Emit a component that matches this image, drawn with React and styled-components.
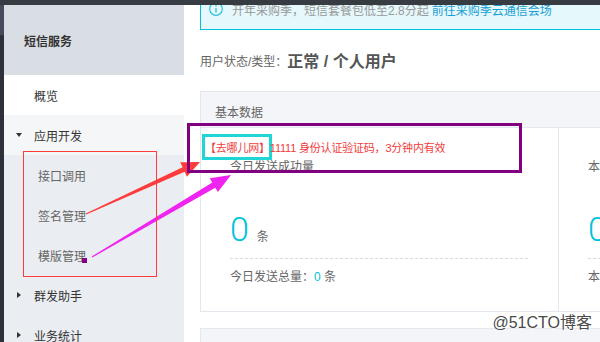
import React from "react";
import styled, { createGlobalStyle } from "styled-components";

const GlobalStyle = createGlobalStyle`
  html, body {
    margin: 0;
    padding: 0;
    background: #fff;
  }
  body {
    font-family: "Liberation Sans", "Noto Sans CJK SC", sans-serif;
  }
`;

const menu = [
  { label: "概览", kind: "item", bg: "#ffffff" },
  { label: "应用开发", kind: "group", open: true, bg: "#f5f6f8" },
  { label: "接口调用", kind: "sub" },
  { label: "签名管理", kind: "sub" },
  { label: "模版管理", kind: "sub" },
  { label: "群发助手", kind: "group" },
  { label: "业务统计", kind: "group" },
];

const stats = [
  { title: "今日发送成功量", total: "今日发送总量：" },
  { title: "本月发送成功量", total: "本月发送总量：" },
];

const App = () => {
  return (
    <Page>
      <GlobalStyle />
      <TopBar />
      <Body>
        <Rail />
        <Sidebar>
          <SideHeader>短信服务</SideHeader>
          {menu.map((m) => (
            <MenuItem key={m.label} $kind={m.kind} $bg={m.bg}>
              {m.kind === "group" && (
                <CaretBox>
                  <Caret $open={m.open} />
                </CaretBox>
              )}
              {m.label}
            </MenuItem>
          ))}
        </Sidebar>
        <Main>
          <MainInner>
            <Notice>
              <svg width="14" height="14" viewBox="0 0 14 14">
                <circle cx="7" cy="7" r="6.3" fill="none" stroke="#2bbfe0" strokeWidth="1.2" />
                <line x1="7" y1="6" x2="7" y2="10.5" stroke="#2bbfe0" strokeWidth="1.3" />
                <circle cx="7" cy="4" r="0.8" fill="#2bbfe0" />
              </svg>
              <NoticeText>开年采购季，短信套餐包低至2.8分起</NoticeText>
              <NoticeLink>前往采购季云通信会场</NoticeLink>
            </Notice>
            <StatusRow>
              <StatusLabel>用户状态/类型：</StatusLabel>
              <StatusValue>正常 / 个人用户</StatusValue>
            </StatusRow>
            <Card>
              <CardHeader>基本数据</CardHeader>
              <CardBody>
                {stats.map((s) => (
                  <Stat key={s.title}>
                    <StatLabel>{s.title}</StatLabel>
                    <NumberRow>
                      <BigNumber>0</BigNumber>
                      <Unit>条</Unit>
                    </NumberRow>
                    <Dashed />
                    <StatLabel>
                      {s.total}
                      <Cyan>0</Cyan> 条
                    </StatLabel>
                  </Stat>
                ))}
              </CardBody>
            </Card>
            <Card $gap={16}>
              <CardHeader />
            </Card>
          </MainInner>
        </Main>
      </Body>

      <Arrows width="600" height="342" viewBox="0 0 600 342">
        <polygon
          points="86.2,214.5 184.6,171.8 186.9,176.8 200,162 180.3,162.2 182.6,167.2 85.8,213.5"
          fill="#ff3c3c"
        />
        <polygon
          points="92.3,257.5 215.3,187.8 217.9,192.1 231,175 209.7,178.3 212.3,182.6 91.7,256.5"
          fill="#f024f0"
        />
        <rect x="82" y="258" width="5" height="5" fill="#800080" />
      </Arrows>
      <RedFrame />
      <PurpleFrame />
      <CyanFrame />
      <SmsText>【去哪儿网】11111 身份认证验证码，3分钟内有效</SmsText>
      <Watermark>@51CTO博客</Watermark>
    </Page>
  );
};

export default App;

const Page = styled.div`
  position: relative;
  width: 600px;
  height: 342px;
  overflow: hidden;
  display: flex;
  flex-direction: column;
`;

const TopBar = styled.div`
  height: 5px;
  flex-shrink: 0;
  background: #373c42;
  position: relative;
  z-index: 2;
`;

const Body = styled.div`
  flex: 1;
  display: flex;
  min-height: 0;
`;

const Rail = styled.div`
  width: 4px;
  flex-shrink: 0;
  background: linear-gradient(#454b5b 0 30px, #2e3139 30px);
`;

const Sidebar = styled.div`
  width: 180px;
  flex-shrink: 0;
  display: flex;
  flex-direction: column;
  background: #eaedf1;
`;

const SideHeader = styled.div`
  height: 70px;
  flex-shrink: 0;
  display: flex;
  align-items: center;
  padding-left: 20px;
  background: #d9dee4;
  color: #333;
  font-size: 12px;
  font-weight: 700;
`;

const MenuItem = styled.div`
  height: 40px;
  flex-shrink: 0;
  display: flex;
  align-items: center;
  box-sizing: border-box;
  padding-left: ${(p) => (p.$kind === "sub" ? 34 : p.$kind === "group" ? 11 : 30)}px;
  background: ${(p) => p.$bg || "transparent"};
  color: ${(p) => (p.$kind === "sub" ? "#666" : "#333")};
  font-size: 12px;
`;

const CaretBox = styled.span`
  width: 7px;
  margin-right: 12px;
  display: flex;
  justify-content: center;
`;

const Caret = styled.span`
  width: 0;
  height: 0;
  ${(p) =>
    p.$open
      ? `border-left: 3.5px solid transparent;
         border-right: 3.5px solid transparent;
         border-top: 4px solid #333;`
      : `border-top: 3px solid transparent;
         border-bottom: 3px solid transparent;
         border-left: 4px solid #333;`}
`;

const Main = styled.div`
  flex: 1;
  min-width: 0;
  overflow: hidden;
  padding-left: 16px;
  background: #fff;
`;

const MainInner = styled.div`
  width: 760px;
  margin-top: -17px;
`;

const Notice = styled.div`
  height: 40px;
  display: flex;
  align-items: center;
  padding-left: 8px;
  border: 1px solid #00c1de;
  background: #e5f8fc;
  font-size: 12px;

  svg {
    margin-right: 9px;
  }
`;

const NoticeText = styled.span`
  color: #999;
`;

const NoticeLink = styled.span`
  margin-left: 3px;
  color: #1a9fd6;
`;

const StatusRow = styled.div`
  margin-top: 18px;
  height: 24px;
  display: flex;
  align-items: center;
`;

const StatusLabel = styled.span`
  font-size: 12px;
  color: #666;
`;

const StatusValue = styled.span`
  font-size: 16px;
  font-weight: 700;
  color: #555;
`;

const Card = styled.div`
  margin-top: ${(p) => p.$gap || 19}px;
  border: 1px solid #e3e8ee;
`;

const CardHeader = styled.div`
  height: 36px;
  box-sizing: border-box;
  padding: 4px 0 0 14px;
  display: flex;
  align-items: center;
  background: #f4f5f8;
  border-bottom: 1px solid #e3e8ee;
  color: #666;
  font-size: 12px;
`;

const CardBody = styled.div`
  height: 183px;
  display: flex;
  background: #fff;
`;

const Stat = styled.div`
  width: 358px;
  flex-shrink: 0;
  box-sizing: border-box;
  padding: 31px 30px 0 29px;
  border-right: 1px solid #e3e8ee;
`;

const StatLabel = styled.div`
  line-height: 16px;
  font-size: 12px;
  color: #666;

  & + & {
    margin-top: 10px;
  }
`;

const NumberRow = styled.div`
  margin-top: 34px;
  height: 40px;
  display: flex;
  align-items: baseline;
`;

const BigNumber = styled.span`
  font-family: Roboto, "Liberation Sans", sans-serif;
  font-weight: 300;
  font-size: 34px;
  line-height: 40px;
  color: #00c1de;
`;

const Unit = styled.span`
  margin-left: 8px;
  font-size: 12px;
  color: #666;
`;

const Dashed = styled.div`
  margin-top: 9px;
  margin-bottom: 10px;
  border-top: 1px dashed #dadada;
`;

const Cyan = styled.span`
  color: #00c1de;
`;

const Arrows = styled.svg`
  position: absolute;
  left: 0;
  top: 0;
  pointer-events: none;
`;

const RedFrame = styled.div`
  position: absolute;
  left: 23px;
  top: 151px;
  width: 134px;
  height: 126px;
  box-sizing: border-box;
  border: 1px solid #ff3b3b;
`;

const PurpleFrame = styled.div`
  position: absolute;
  left: 187px;
  top: 123px;
  width: 335px;
  height: 50px;
  box-sizing: border-box;
  border: 3px solid #800080;
`;

const CyanFrame = styled.div`
  position: absolute;
  left: 202px;
  top: 134px;
  width: 70px;
  height: 26px;
  box-sizing: border-box;
  border: 3px solid #21d4d6;
`;

const SmsText = styled.div`
  position: absolute;
  left: 205px;
  top: 140px;
  line-height: 16px;
  font-size: 11px;
  letter-spacing: -0.2px;
  white-space: nowrap;
  color: #f23b3b;
`;

const Watermark = styled.div`
  position: absolute;
  right: 8px;
  bottom: 9px;
  line-height: 20px;
  font-size: 16px;
  color: #4a4a4a;
  text-shadow: 0 0 2px #fff, 0 0 2px #fff;
`;
